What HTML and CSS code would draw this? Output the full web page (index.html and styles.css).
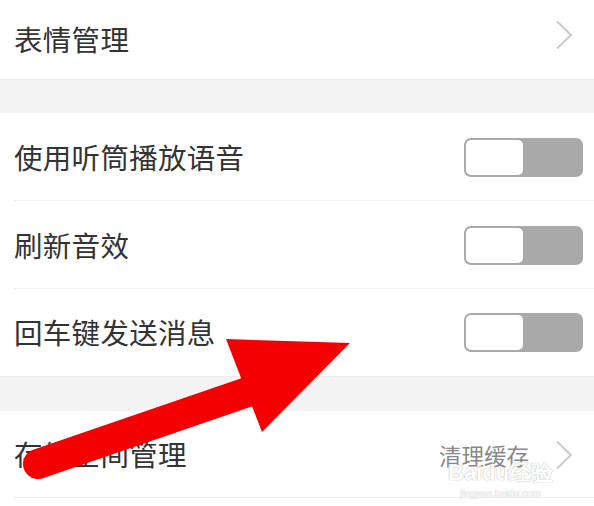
FILE: index.html
```html
<!DOCTYPE html>
<html lang="zh">
<head>
<meta charset="utf-8">
<link rel="stylesheet" href="styles.css">
</head>
<body>
<div class="page">
  <div class="row row-top">
    <span class="label">表情管理</span>
    <svg class="chev chev-top" width="18" height="30" viewBox="0 0 18 30"><polyline points="2,1.5 16,15 2,28.5" fill="none" stroke="#cbcbcb" stroke-width="2"/></svg>
  </div>
  <div class="band"></div>
  <div class="group">
    <div class="row item">
      <span class="label">使用听筒播放语音</span>
      <div class="toggle"><div class="knob"></div></div>
    </div>
    <div class="row item">
      <span class="label">刷新音效</span>
      <div class="toggle"><div class="knob"></div></div>
    </div>
    <div class="row item last">
      <span class="label">回车键发送消息</span>
      <div class="toggle"><div class="knob"></div></div>
    </div>
  </div>
  <div class="band band2"></div>
  <div class="row item storage">
    <span class="label">存储空间管理</span>
    <div class="right">
      <span class="sub">清理缓存</span>
      <svg class="chev" width="18" height="30" viewBox="0 0 18 30"><polyline points="2,1.5 16,15 2,28.5" fill="none" stroke="#cbcbcb" stroke-width="2"/></svg>
    </div>
  </div>
  <div class="watermark">
    <div class="wm-big">Bai<span class="paw">du</span>经验</div>
    <div class="wm-small">jingyan.baidu.com</div>
  </div>
  <svg class="arrow" width="594" height="506" viewBox="0 0 594 506">
    <line x1="38" y1="464" x2="265" y2="386" stroke="#f50000" stroke-width="30" stroke-linecap="round"/>
    <polygon points="226,339 350,343 262,432" fill="#f50000"/>
  </svg>
</div>
</body>
</html>
```
FILE: styles.css
```css
* { box-sizing: border-box; }
html, body { margin: 0; padding: 0; background: #fff; }
body { font-family: "Noto Sans CJK SC", "Noto Sans", sans-serif; color: #333; }
.page { position: relative; width: 594px; height: 506px; overflow: hidden; background: #fff; }
.row { display: flex; align-items: center; justify-content: space-between; padding: 0 11px 0 14px; background: #fff; position: relative; }
.row-top { height: 79px; padding-right: 21px; }
.label { font-size: 28.5px; line-height: 1; color: #333; letter-spacing: 0.3px; }
.band { height: 34px; background: #f4f4f4; border-top: 1px solid #ececec; }
.band2 { height: 35px; }
.item { height: 88px; }
.item::after { content: ""; position: absolute; left: 14px; right: 0; bottom: 0; height: 1px; background: #f0f0f0; }
.item.last::after { display: none; }
.item.last { height: 87px; }
.storage { height: 87px; padding-right: 21px; }
.toggle { width: 119px; height: 39px; border: 2px solid #a9a9a9; border-radius: 7px; background: #a9a9a9; display: flex; }
.knob { width: 57px; height: 100%; background: #fff; border-radius: 5px; }
.right { display: flex; align-items: center; gap: 26px; }
.sub { font-size: 22.5px; color: #888; }
.chev { display: block; }
.chev-top { margin-bottom: 10px; }
.watermark { position: absolute; left: 448px; top: 462px; text-align: center; color: #fff; pointer-events: none; }
.wm-big { font-family: "Liberation Sans", sans-serif; font-size: 22px; font-weight: bold; line-height: 1; color: #fff; text-shadow: 0 0 1px #bbb, 0 0 1px #bbb; }
.wm-small { font-family: "Liberation Sans", sans-serif; font-size: 10px; color: #fff; text-shadow: 0 0 1px #aaa; margin-top: 4px; }
.arrow { position: absolute; left: 0; top: 0; pointer-events: none; }
```
